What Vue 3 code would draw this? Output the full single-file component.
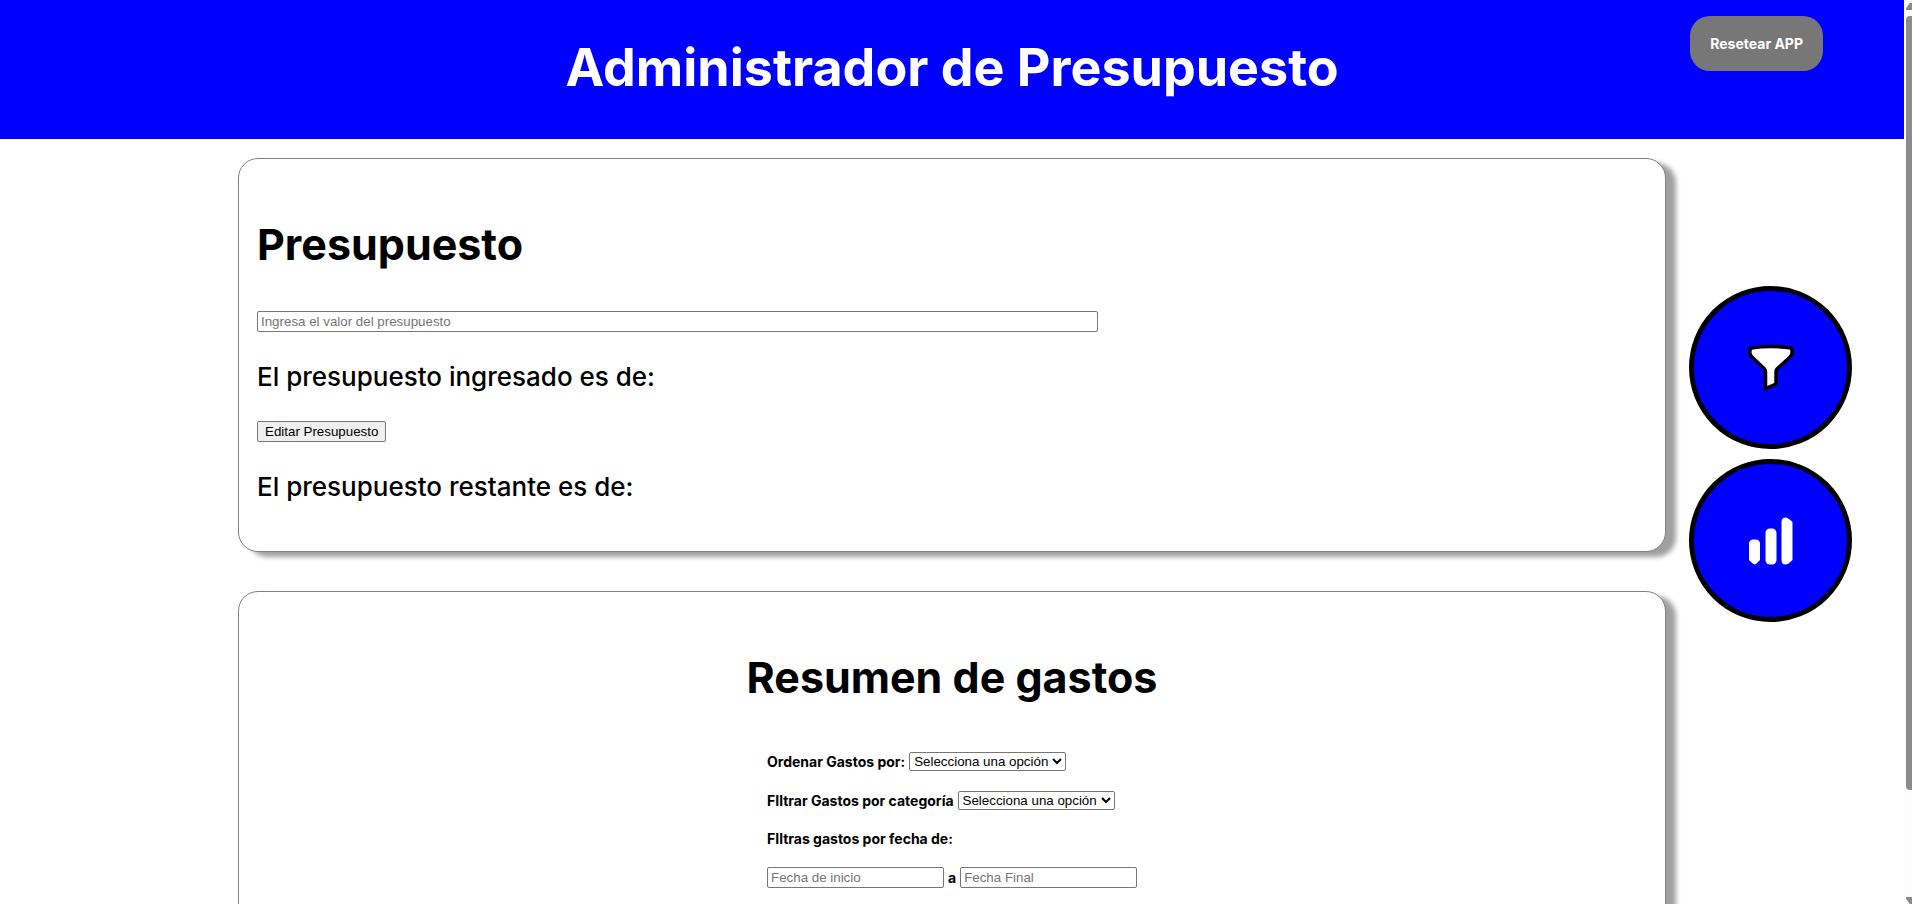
<script setup>
import { ref } from 'vue'

const budget = ref('')
const order = ref('')
const category = ref('')
const startDate = ref('')
const endDate = ref('')

function resetApp() {
  budget.value = ''
  order.value = ''
  category.value = ''
  startDate.value = ''
  endDate.value = ''
}
</script>

<template>
  <div class="window">
    <div class="page">
      <header class="header">
        <h1 class="title">Administrador de Presupuesto</h1>
        <button class="reset" type="button" @click="resetApp">Resetear APP</button>
      </header>

      <main class="content">
        <section class="card">
          <h2 class="heading">Presupuesto</h2>
          <input v-model="budget" class="field budget" type="text" aria-label="Presupuesto" placeholder="Ingresa el valor del presupuesto">
          <p class="line">El presupuesto ingresado es de:</p>
          <button class="edit" type="button">Editar Presupuesto</button>
          <p class="line">El presupuesto restante es de:</p>
        </section>

        <section class="card summary">
          <h2 class="heading">Resumen de gastos</h2>
          <form class="filters" @submit.prevent>
            <div class="row">
              <label for="order">Ordenar Gastos por:</label>
              <select id="order" v-model="order" class="select">
                <option value="">Selecciona una opción</option>
                <option value="fecha">Fecha</option>
                <option value="valor">Valor</option>
              </select>
            </div>
            <div class="row">
              <label for="category">FIltrar Gastos por categoría</label>
              <select id="category" v-model="category" class="select">
                <option value="">Selecciona una opción</option>
                <option value="comida">Comida</option>
                <option value="gastos">Gastos Varios</option>
              </select>
            </div>
            <div class="row">
              <label for="start">FIltras gastos por fecha de:</label>
            </div>
            <div class="row">
              <input id="start" v-model="startDate" class="field date" type="text" placeholder="Fecha de inicio">
              <label for="end">a</label>
              <input id="end" v-model="endDate" class="field date" type="text" placeholder="Fecha Final">
            </div>
          </form>
        </section>
      </main>

      <nav class="actions">
        <button class="round" type="button" aria-label="Filtrar">
          <svg width="48" height="48" viewBox="0 0 48 48">
            <path d="M4 4 Q24 1 44 4 Q47 9 43 13 L30 25 Q29 26 29 28 V40 L18.500 44.500 V28 Q18.500 26 17.500 25 L5 13 Q1 9 4 4 Z" fill="#fff" stroke="#000" stroke-width="3.500" />
          </svg>
        </button>
        <button class="round" type="button" aria-label="Estadísticas">
          <svg width="48" height="48" viewBox="0 0 48 48">
            <g fill="#fff">
              <path d="M2 27 Q2 22.500 6.500 22.500 H8.500 Q13 22.500 13 27 V43 Q8.500 47.500 8 47.500 Q6.500 47.500 2 43 Z" />
              <rect x="18.500" y="11.500" width="11" height="36" rx="4.500" />
              <path d="M34.500 5 Q34.500 0.500 38.500 0.500 Q41 0.500 45.500 5 V43 Q41 47.500 38.500 47.500 Q34.500 47.500 34.500 43 Z" />
            </g>
          </svg>
        </button>
      </nav>
    </div>

    <div class="scrollbar" aria-hidden="true">
      <span class="arrow up"></span>
      <span class="thumb"></span>
      <span class="arrow down"></span>
    </div>
  </div>
</template>

<style>
html,
body {
  background: #fff;
}
</style>

<style scoped>
.window {
  display: flex;
  height: 100vh;
  overflow: hidden;
  color: #000;
  font-family: Inter, "Liberation Sans", sans-serif;
}

.page {
  position: relative;
  flex: 1;
  min-width: 0;
}

.header {
  padding: 38px 20px 41px;
  background: #00f;
  color: #fff;
  text-align: center;
}

.title {
  margin: 0;
  font-size: 52px;
  line-height: 60px;
  font-weight: 700;
}

.reset {
  position: absolute;
  top: 16px;
  right: 81px;
  padding: 20px;
  border: 0;
  border-radius: 20px;
  background: #777;
  color: #fff;
  font-family: inherit;
  font-size: 14px;
  line-height: 15px;
  font-weight: 700;
}

.card {
  box-sizing: border-box;
  width: 75%;
  margin: 19px auto 39px;
  padding: 59px 18px 20px;
  border: 1px solid #808080;
  border-radius: 20px;
  background: #fff;
  box-shadow: 10px 5px 5px #a0a0a0;
}

.heading {
  margin: 0 0 41px;
  font-size: 43px;
  line-height: 52px;
  font-weight: 700;
}

.field {
  display: block;
  box-sizing: border-box;
  height: 21px;
  padding: 1px 3px;
  border: 1px solid #767676;
  border-radius: 2px;
  background: #fff;
  font-family: "Liberation Sans", Arial, sans-serif;
}

.field::placeholder {
  color: #757575;
}

.budget {
  width: 841px;
  max-width: 100%;
}

.line {
  margin: 28px 0;
  font-size: 26px;
  line-height: 33px;
  font-weight: 500;
}

.edit {
  display: block;
  height: 21px;
  padding: 0 7px;
  border: 1px solid #767676;
  border-radius: 2px;
  background: #efefef;
  color: #000;
  font-family: "Liberation Sans", Arial, sans-serif;
}

.summary {
  padding-bottom: 60px;
}

.summary .heading {
  margin-bottom: 49px;
  text-align: center;
}

.filters {
  display: grid;
  gap: 20px;
  width: 370px;
  margin: 0 auto;
  font-size: 14px;
  line-height: 17px;
  font-weight: 700;
}

.row {
  display: flex;
  align-items: center;
  gap: 4px;
  white-space: nowrap;
}

.select {
  height: 19px;
  border: 1px solid #767676;
  border-radius: 2px;
  background: #fff;
  color: #000;
  font-family: "Liberation Sans", Arial, sans-serif;
}

.date {
  width: 177px;
}

.actions {
  position: absolute;
  top: 286px;
  right: 52px;
  display: grid;
  gap: 10px;
}

.round {
  display: grid;
  place-items: center;
  width: 163px;
  height: 163px;
  padding: 0;
  border: 5px solid #000;
  border-radius: 50%;
  background: #00f;
}

.scrollbar {
  display: flex;
  flex-direction: column;
  align-items: flex-end;
  width: 8px;
  background: #fcfcfc;
}

.arrow {
  width: 6px;
  height: 7px;
  background: #8b8b8b;
}

.up {
  margin: 3px 0 6px;
  clip-path: polygon(60% 0, 100% 0, 100% 100%, 0 100%, 0 80%);
}

.thumb {
  flex: 775;
  width: 6px;
  border-radius: 4px 0 0 4px;
  background: #8b8b8b;
}

.scrollbar::after {
  content: "";
  flex: 107;
  order: 1;
}

.down {
  order: 2;
  clip-path: polygon(0 0, 100% 0, 100% 100%, 60% 100%, 0 20%);
}
</style>
